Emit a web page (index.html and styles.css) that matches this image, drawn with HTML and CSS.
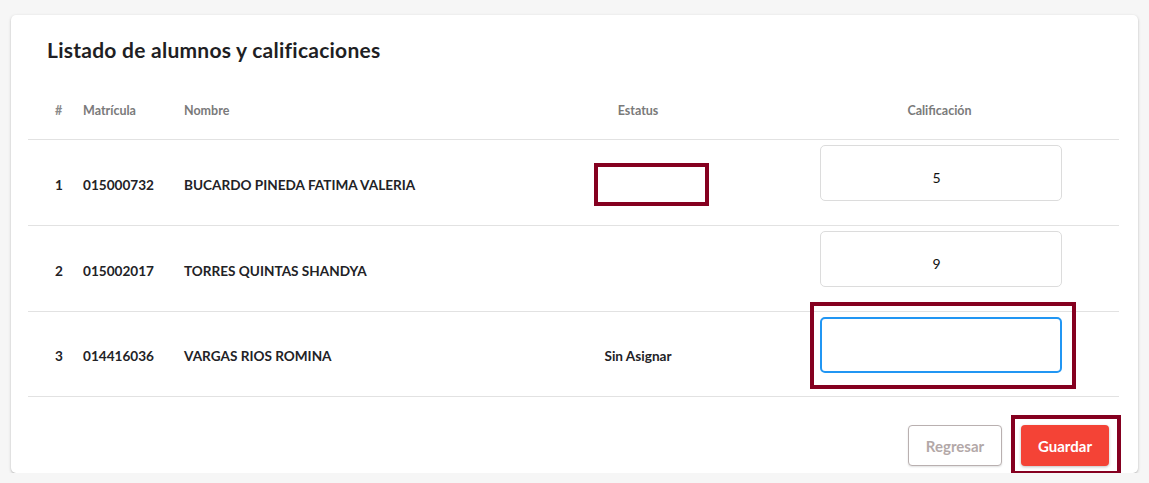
FILE: index.html
```html
<!DOCTYPE html>
<html lang="es">
<head>
<meta charset="utf-8">
<title>Listado de alumnos y calificaciones</title>
<link rel="stylesheet" href="styles.css">
</head>
<body>
<div class="card">
  <h1 class="title">Listado de alumnos y calificaciones</h1>
  <div class="table">
    <div class="row head">
      <div class="c-num">#</div>
      <div class="c-mat">Matrícula</div>
      <div class="c-nom">Nombre</div>
      <div class="c-est">Estatus</div>
      <div class="c-sp"></div>
      <div class="c-cal">Calificación</div>
    </div>
    <div class="row">
      <div class="c-num">1</div>
      <div class="c-mat">015000732</div>
      <div class="c-nom">BUCARDO PINEDA FATIMA VALERIA</div>
      <div class="c-est"><span class="mark mark-status"></span></div>
      <div class="c-sp"></div>
      <div class="c-cal"><input class="grade" type="text" value="5"></div>
    </div>
    <div class="row">
      <div class="c-num">2</div>
      <div class="c-mat">015002017</div>
      <div class="c-nom">TORRES QUINTAS SHANDYA</div>
      <div class="c-est"></div>
      <div class="c-sp"></div>
      <div class="c-cal"><input class="grade" type="text" value="9"></div>
    </div>
    <div class="row">
      <div class="c-num">3</div>
      <div class="c-mat">014416036</div>
      <div class="c-nom">VARGAS RIOS ROMINA</div>
      <div class="c-est">Sin Asignar</div>
      <div class="c-sp"></div>
      <div class="c-cal"><span class="focus-wrap"><input class="grade focused" type="text" value=""></span></div>
    </div>
  </div>
  <div class="actions">
    <button class="btn btn-back" type="button">Regresar</button>
    <span class="save-wrap"><button class="btn btn-save" type="button">Guardar</button></span>
  </div>
</div>
</body>
</html>
```
FILE: styles.css
```css
html, body {
  margin: 0;
  padding: 0;
  background: #f6f6f6;
}
body {
  padding: 15px 11px 0 11px;
  font-family: "Lato", "Noto Sans", sans-serif;
  color: #222226;
}
.card {
  background: #fff;
  border-radius: 5px;
  box-shadow: 0 1px 3px rgba(0,0,0,0.22), 0 1px 1px rgba(0,0,0,0.08);
  padding: 23px 19px 7px 17px;
  height: 458px;
  box-sizing: border-box;
}
.title {
  margin: 0 0 22px 19px;
  font-size: 21px;
  line-height: 24px;
  font-weight: 700;
  letter-spacing: 0.25px;
  color: #1f1f24;
}
.table {
  width: 1091px;
}
.row {
  display: grid;
  grid-template-columns: 27px 28px 101px 376px 156px 44px 359px;
  grid-template-areas: "pad num mat nom est sp cal";
  height: 86px;
  padding-top: 4px;
  border-bottom: 1px solid #e2e2e2;
  box-sizing: border-box;
  align-items: center;
  font-size: 13.6px;
  font-weight: 700;
  color: #222226;
}
.row:last-child { height: 85px; }
.row.head {
  height: 56px;
  padding-top: 0;
  padding-bottom: 2px;
  font-size: 12.5px;
  font-weight: 700;
  color: #7a7a7a;
}
.c-num { grid-area: num; }
.c-mat { grid-area: mat; }
.c-nom { grid-area: nom; }
.c-est { grid-area: est; text-align: center; position: relative; height: 100%; display: flex; align-items: center; justify-content: center; }
.c-sp { grid-area: sp; }
.c-cal { grid-area: cal; display: flex; justify-content: center; align-self: start; padding-top: 1px; padding-left: 2px; }
.head .c-est { height: auto; }
.head .c-cal { align-self: center; padding-top: 0; padding-left: 0; }
.head .c-num { color: #8a8a8a; }
.grade {
  width: 242px;
  height: 56px;
  box-sizing: border-box;
  border: 1px solid #dcdcdc;
  border-radius: 5px;
  padding: 9px 8px 0 0;
  text-align: center;
  font-family: "Lato", "Noto Sans", sans-serif;
  font-size: 14px;
  font-weight: 400;
  color: #111;
  background: #fff;
  outline: none;
}
.grade.focused {
  border: 2px solid #2196f3;
}
.focus-wrap {
  position: relative;
  display: inline-block;
  height: 56px;
}
.focus-wrap::after {
  content: "";
  position: absolute;
  left: -10px;
  right: -14px;
  top: -15px;
  bottom: -16px;
  border: 4px solid #850020;
  pointer-events: none;
}
.mark-status {
  position: absolute;
  left: 34px;
  top: 19px;
  width: 115px;
  height: 43px;
  box-sizing: border-box;
  border: 4px solid #850020;
}
.actions {
  display: flex;
  justify-content: flex-end;
  gap: 19px;
  margin-top: 28px;
  padding-right: 10px;
  width: 1091px;
  box-sizing: border-box;
}
.btn {
  height: 41px;
  border-radius: 4px;
  font-family: "Lato", "Noto Sans", sans-serif;
  font-size: 15px;
  font-weight: 700;
  cursor: pointer;
}
.btn-back {
  width: 94px;
  background: #fff;
  border: 1px solid #b9b0b0;
  color: #b3a8a8;
  box-shadow: 0 1px 2px rgba(0,0,0,0.12);
}
.save-wrap {
  position: relative;
  display: inline-block;
  height: 41px;
}
.save-wrap::after {
  content: "";
  position: absolute;
  left: -10px;
  right: -12px;
  top: -10px;
  bottom: -9px;
  border: 4px solid #850020;
  pointer-events: none;
}
.btn-save {
  display: block;
  width: 88px;
  background: #f44336;
  border: none;
  color: #fff;
  box-shadow: 0 1px 3px rgba(0,0,0,0.25);
}
```
